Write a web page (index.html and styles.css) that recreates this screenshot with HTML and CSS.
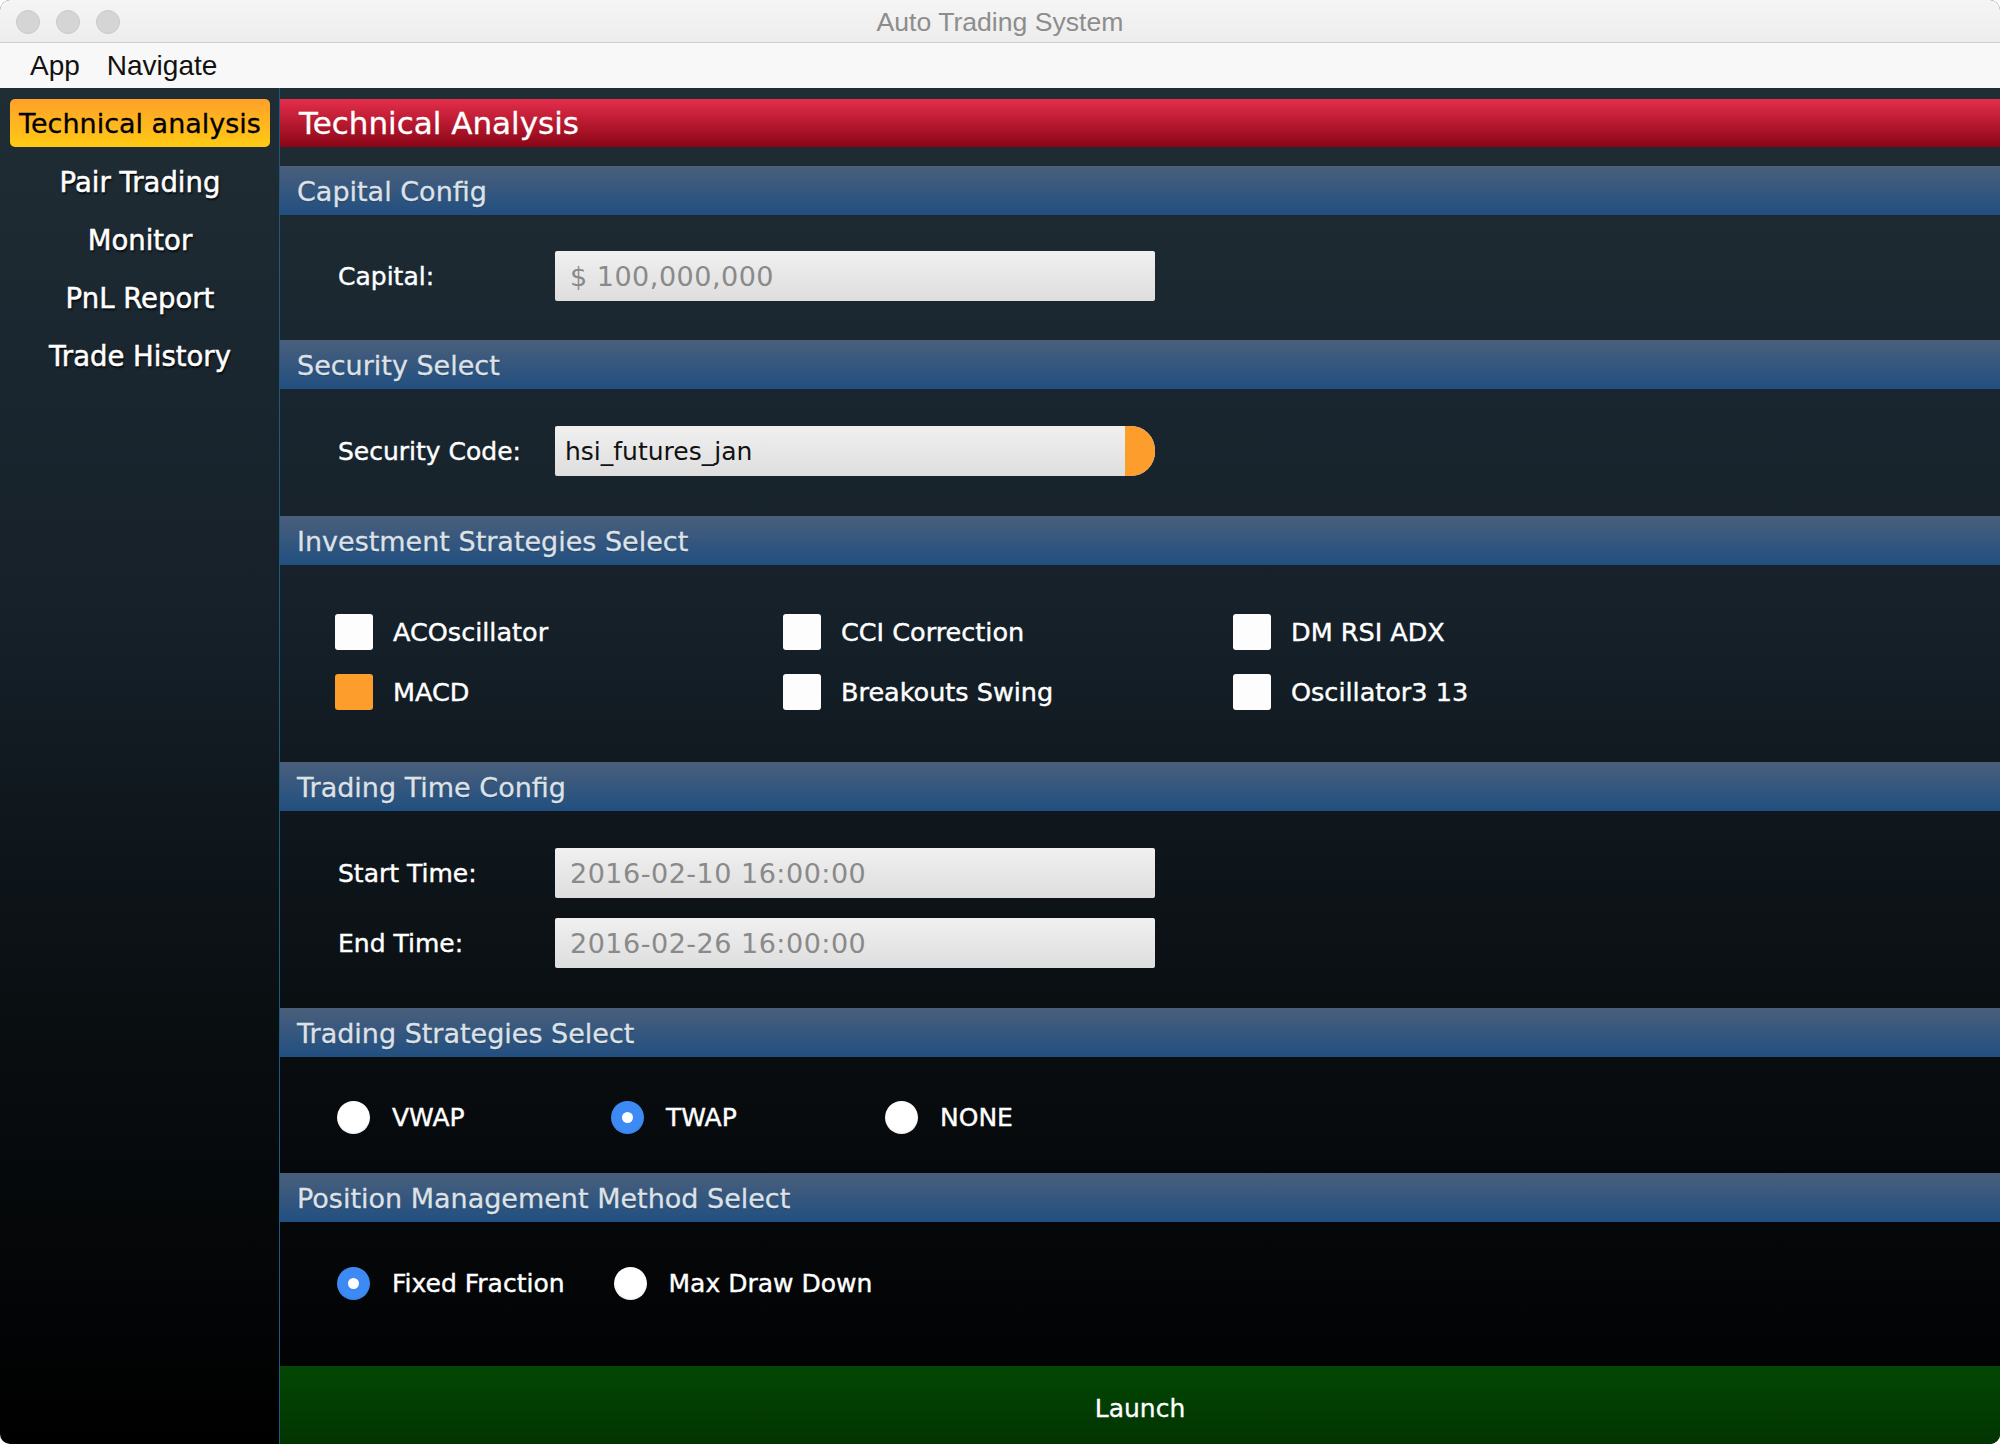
FILE: index.html
```html
<!DOCTYPE html>
<html>
<head>
<meta charset="utf-8">
<title>Auto Trading System</title>
<link rel="stylesheet" href="styles.css">
</head>
<body>
<div class="window">
  <div class="titlebar">
    <div class="lights"><span class="light"></span><span class="light"></span><span class="light"></span></div>
    <div class="title">Auto Trading System</div>
  </div>
  <div class="menubar"><span class="menu">App</span><span class="menu">Navigate</span></div>
  <div class="app">
    <nav class="sidebar">
      <div class="nav-active">Technical analysis</div>
      <div class="nav-item">Pair Trading</div>
      <div class="nav-item">Monitor</div>
      <div class="nav-item">PnL Report</div>
      <div class="nav-item">Trade History</div>
    </nav>
    <main class="main">
      <div class="page-title">Technical Analysis</div>

      <div class="sec-head">Capital Config</div>
      <div class="sec-body b-capital">
        <div class="field"><span class="label">Capital:</span><div class="input prompt">$ 100,000,000</div></div>
      </div>

      <div class="sec-head">Security Select</div>
      <div class="sec-body b-security">
        <div class="field"><span class="label">Security Code:</span><div class="input combo"><span class="combo-text">hsi_futures_jan</span><span class="combo-btn"></span></div></div>
      </div>

      <div class="sec-head">Investment Strategies Select</div>
      <div class="sec-body b-invest">
        <div class="check-grid">
          <div class="check"><span class="box"></span><span class="check-label">ACOscillator</span></div>
          <div class="check"><span class="box"></span><span class="check-label">CCI Correction</span></div>
          <div class="check"><span class="box"></span><span class="check-label">DM RSI ADX</span></div>
          <div class="check"><span class="box on"></span><span class="check-label">MACD</span></div>
          <div class="check"><span class="box"></span><span class="check-label">Breakouts Swing</span></div>
          <div class="check"><span class="box"></span><span class="check-label">Oscillator3 13</span></div>
        </div>
      </div>

      <div class="sec-head">Trading Time Config</div>
      <div class="sec-body b-time">
        <div class="field"><span class="label">Start Time:</span><div class="input prompt">2016-02-10 16:00:00</div></div>
        <div class="field"><span class="label">End Time:</span><div class="input prompt">2016-02-26 16:00:00</div></div>
      </div>

      <div class="sec-head">Trading Strategies Select</div>
      <div class="sec-body b-trading">
        <div class="radio-row fixed">
          <div class="radio"><span class="dot"></span><span class="radio-label">VWAP</span></div>
          <div class="radio"><span class="dot sel"></span><span class="radio-label">TWAP</span></div>
          <div class="radio"><span class="dot"></span><span class="radio-label">NONE</span></div>
        </div>
      </div>

      <div class="sec-head">Position Management Method Select</div>
      <div class="sec-body b-position">
        <div class="radio-row loose">
          <div class="radio"><span class="dot sel"></span><span class="radio-label">Fixed Fraction</span></div>
          <div class="radio"><span class="dot"></span><span class="radio-label">Max Draw Down</span></div>
        </div>
      </div>

      <div class="launch">Launch</div>
    </main>
  </div>
</div>
</body>
</html>
```

FILE: styles.css
```css
* { box-sizing: border-box; }
html, body { margin: 0; padding: 0; }
body {
  width: 2000px;
  height: 1444px;
  overflow: hidden;
  background: #ffffff;
  font-family: "DejaVu Sans", "Open Sans", sans-serif;
}
.window {
  width: 2000px;
  height: 1444px;
  display: flex;
  flex-direction: column;
  border-radius: 10px;
  overflow: hidden;
  background: linear-gradient(to bottom, #212f37 0px, #16212a 600px, #0a0f12 1000px, #000000 1444px);
}
.titlebar {
  height: 43px;
  flex: none;
  background: linear-gradient(to bottom, #f5f5f5, #ededed);
  border-bottom: 1px solid #cfcfcf;
  position: relative;
  display: flex;
  align-items: center;
  justify-content: center;
}
.lights {
  position: absolute;
  left: 16px;
  top: 10px;
  display: flex;
  gap: 16px;
}
.light {
  width: 24px;
  height: 24px;
  border-radius: 50%;
  background: #d5d5d5;
  border: 1px solid #c9c9c9;
}
.title {
  font-family: "Liberation Sans", Arial, sans-serif;
  font-size: 26.6px;
  color: #8d8d8d;
  padding-top: 3px;
}
.menubar {
  height: 45px;
  flex: none;
  background: #f8f8f8;
  display: flex;
  align-items: center;
  padding-left: 30px;
  gap: 27px;
}
.menu {
  font-family: "Liberation Sans", Arial, sans-serif;
  font-size: 28px;
  color: #111;
}
.app {
  flex: 1;
  display: flex;
  min-height: 0;
}
.sidebar {
  width: 280px;
  flex: none;
  border-right: 1px solid #1d5a80;
  padding: 11px 9px 0 10px;
  display: flex;
  flex-direction: column;
}
.nav-active {
  height: 48px;
  border-radius: 5px;
  background: linear-gradient(to bottom, #ffa02a, #ffcb14);
  color: #000;
  font-size: 27px;
  display: flex;
  align-items: center;
  justify-content: center;
  margin-bottom: 6px;
  -webkit-text-stroke: 0.3px #000;
}
.nav-item {
  height: 58px;
  display: flex;
  align-items: center;
  justify-content: center;
  color: #ffffff;
  font-size: 27.5px;
  text-shadow: 1px 2px 2px rgba(0,0,0,0.85);
  -webkit-text-stroke: 0.5px #ffffff;
}
.main {
  flex: 1;
  display: flex;
  flex-direction: column;
  padding-top: 11px;
  min-width: 0;
}
.page-title {
  height: 48px;
  flex: none;
  background: linear-gradient(to bottom, #e52e4b, #8a0516);
  color: #ffffff;
  font-size: 31px;
  display: flex;
  align-items: center;
  padding-left: 19px;
  margin-bottom: 19px;
  -webkit-text-stroke: 0.3px #ffffff;
}
.sec-head {
  height: 49px;
  flex: none;
  background: linear-gradient(to bottom, #4a5f7b, #214f81);
  color: #dde2e8;
  font-size: 27px;
  display: flex;
  align-items: center;
  padding-left: 17px;
  padding-top: 2px;
  text-shadow: 0 1px 1px rgba(0,0,0,0.3);
  -webkit-text-stroke: 0.3px #dde2e8;
}
.sec-body {
  flex: none;
  padding-left: 58px;
  display: flex;
  flex-direction: column;
}
.b-capital { height: 125px; padding-top: 36px; }
.b-security { height: 127px; padding-top: 37px; }
.b-invest { height: 197px; padding-top: 37px; padding-left: 55px; }
.b-time { height: 197px; padding-top: 37px; gap: 20px; }
.b-trading { height: 116px; padding-top: 35px; padding-left: 57px; }
.b-position { height: 144px; padding-top: 36px; padding-left: 57px; }

.field {
  display: flex;
  align-items: center;
  height: 50px;
}
.label {
  width: 217px;
  flex: none;
  color: #ffffff;
  font-size: 25px;
  -webkit-text-stroke: 0.4px #ffffff;
}
.input {
  width: 600px;
  height: 50px;
  background: linear-gradient(to bottom, #f0f0f0, #dedede);
  border-radius: 2px;
  display: flex;
  align-items: center;
}
.prompt {
  padding-left: 15px;
  color: #8a8a8a;
  font-size: 27px;
  letter-spacing: 0.5px;
}
.combo {
  padding-left: 10px;
  justify-content: space-between;
  border-radius: 2px 24px 24px 2px;
  overflow: hidden;
}
.combo-text {
  color: #111;
  font-size: 25px;
}
.combo-btn {
  width: 30px;
  height: 50px;
  background: #fd9d2b;
  border-radius: 0 24px 24px 0;
}
.check-grid {
  display: grid;
  grid-template-columns: 448px 450px 450px;
  grid-auto-rows: 60px;
}
.check {
  display: flex;
  align-items: center;
  gap: 20px;
}
.box {
  width: 38px;
  height: 36px;
  border-radius: 3px;
  background: #fdfdfd;
  flex: none;
}
.box.on { background: #fd9d2b; }
.check-label {
  color: #ffffff;
  font-size: 25.5px;
  -webkit-text-stroke: 0.4px #ffffff;
}
.radio-row {
  display: flex;
  align-items: center;
  height: 50px;
}
.radio-row.fixed .radio { width: 274px; }
.radio-row.loose { gap: 49px; }
.radio {
  display: flex;
  align-items: center;
  gap: 22px;
}
.dot {
  width: 33px;
  height: 33px;
  border-radius: 50%;
  background: radial-gradient(circle at 50% 45%, #ffffff 60%, #e6e6e6 85%, #cfcfcf 100%);
  flex: none;
  display: flex;
  align-items: center;
  justify-content: center;
}
.dot.sel {
  background: radial-gradient(circle at 50% 45%, #3d8af5 60%, #2f7ae6 100%);
}
.dot.sel::after {
  content: "";
  width: 11px;
  height: 11px;
  border-radius: 50%;
  background: #ffffff;
}
.radio-label {
  color: #ffffff;
  font-size: 25px;
  -webkit-text-stroke: 0.4px #ffffff;
}
.launch {
  flex: 1;
  background: linear-gradient(to bottom, #034703, #023402);
  color: #ffffff;
  font-size: 25px;
  display: flex;
  align-items: center;
  justify-content: center;
  padding-top: 6px;
  -webkit-text-stroke: 0.3px #ffffff;
}
```
